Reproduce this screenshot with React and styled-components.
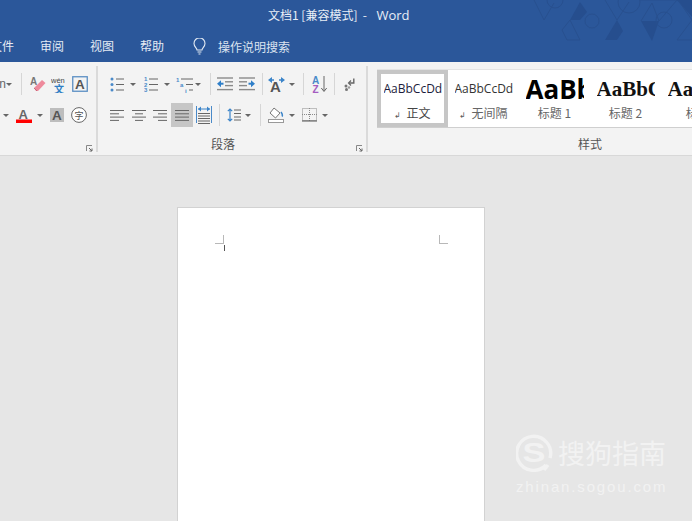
import React from 'react';
import styled, { createGlobalStyle } from 'styled-components';

const GlobalStyle = createGlobalStyle`
  html, body {
    margin: 0;
    padding: 0;
    background: #e6e6e6;
  }
  body {
    font-family: "Noto Sans CJK SC", "Liberation Sans", sans-serif;
  }
`;

const Window = styled.div`
  position: relative;
  width: 692px;
  height: 521px;
  overflow: hidden;
  display: flex;
  flex-direction: column;
`;

const TitleBar = styled.header`
  position: relative;
  height: 62px;
  flex: none;
  background: #2b579a;
  color: #fff;
  overflow: hidden;
`;

const TitleText = styled.div`
  height: 30px;
  padding-left: 268px;
  font-size: 12px;
  line-height: 29px;
  white-space: pre;
  color: #e8eef6;
`;

const TitleApp = styled.span`
  font-family: "Open Sans", sans-serif;
  font-size: 13px;
  margin-left: 4px;
`;

const Tabs = styled.nav`
  display: flex;
  align-items: center;
  height: 32px;
  margin-left: -10px;
  gap: 26px;
`;

const Tab = styled.span`
  font-size: 12px;
  line-height: 32px;
  color: #e4ebf4;
`;

const TellMe = styled.span`
  display: flex;
  align-items: center;
  gap: 12px;
  margin-left: 3px;
  font-size: 12px;
  color: #dbe4f0;
`;

const Pattern = styled.svg`
  position: absolute;
  top: 0;
  right: 0;
`;

const Ribbon = styled.section`
  display: grid;
  grid-template-columns: 98px 270px 444px;
  height: 93px;
  flex: none;
  background: #f3f3f3;
  border-bottom: 1px solid #d8d8d8;
  overflow: hidden;
`;

const Group = styled.div`
  position: relative;
  display: flex;
  flex-direction: column;
  margin: 4px 0 3px;
  height: 86px;
  box-sizing: border-box;
  padding-top: ${(p) => (p.$last ? 3 : 6)}px;
  border-right: ${(p) => (p.$last ? 'none' : '2px solid #dadada')};
`;

const Rows = styled.div`
  display: flex;
  flex-direction: column;
  gap: 7px;
`;

const Row = styled.div`
  display: flex;
  align-items: center;
  height: 24px;
`;

const Tool = styled.span`
  display: flex;
  align-items: center;
  justify-content: center;
  flex: none;
  width: ${(p) => p.$w}px;
  height: ${(p) => p.$h || 24}px;
  margin-left: ${(p) => p.$ml || 0}px;
  background: ${(p) => (p.$active ? '#c6c6c6' : 'transparent')};
`;

const ClippedFont = styled.span`
  flex: none;
  width: 6px;
  overflow: hidden;
  direction: rtl;
  font-family: "Liberation Sans", sans-serif;
  font-size: 12px;
  color: #666;
`;

const Sep = styled.span`
  flex: none;
  width: 1px;
  height: 22px;
  margin-left: ${(p) => p.$ml || 0}px;
  background: #d6d6d6;
`;

const Caret = styled.span`
  flex: none;
  width: 0;
  height: 0;
  margin-left: ${(p) => p.$ml || 0}px;
  border-left: 3px solid transparent;
  border-right: 3px solid transparent;
  border-top: 3px solid #666;
`;

const GroupLabel = styled.div`
  position: absolute;
  left: 0;
  right: 0;
  bottom: 0;
  padding-right: ${(p) => p.$inset || 0}px;
  text-align: center;
  font-size: 12px;
  line-height: 16px;
  color: #555;
`;

const Launcher = styled.svg`
  position: absolute;
  right: 3px;
  bottom: 0;
`;

const Gallery = styled.div`
  display: flex;
  height: 59px;
  margin-left: 9px;
  background: #fff;
  border-top: 1px solid #e4e4e4;
  border-bottom: 1px solid #cfcfcf;
  box-sizing: border-box;
`;

const StyleCard = styled.div`
  flex: none;
  display: flex;
  flex-direction: column;
  align-items: center;
  box-sizing: border-box;
  width: 71px;
  height: 57px;
  overflow: hidden;
  border: 4px solid ${(p) => (p.$selected ? '#c6c6c6' : 'transparent')};
`;

const Sample = styled.div`
  width: 58px;
  height: 30px;
  flex: none;
  overflow: hidden;
  white-space: nowrap;
  color: ${(p) => p.$color || '#222'};
  font-family: ${(p) => (p.$serif ? '"Liberation Serif", serif' : '"Open Sans", sans-serif')};
  font-weight: ${(p) => (p.$bold ? 700 : 400)};
  font-size: ${(p) => p.$size}px;
  line-height: 30px;
`;

const StyleName = styled.div`
  font-size: 12px;
  line-height: 16px;
  margin: 1px 0 0 ${(p) => p.$nudge || 0}px;
  color: ${(p) => (p.$selected ? '#444' : '#666')};
  white-space: nowrap;
`;

const ParaGlyph = styled.span`
  font-size: 8px;
  margin-right: 5px;
  color: #555;
`;

const Canvas = styled.main`
  flex: 1;
  padding: 51px 0 0 177px;
  background: #e6e6e6;
`;

const Page = styled.div`
  position: relative;
  width: 306px;
  height: 400px;
  background: #fff;
  border: 1px solid #d2d2d2;
`;

const CropMark = styled.span`
  position: absolute;
  top: 27px;
  left: ${(p) => p.$left}px;
  width: 8px;
  height: 8px;
  border-bottom: 1px solid #b8b8b8;
  ${(p) => (p.$right ? 'border-left: 1px solid #b8b8b8;' : 'border-right: 1px solid #b8b8b8;')}
`;

const Cursor = styled.span`
  position: absolute;
  top: 37px;
  left: 46px;
  width: 1px;
  height: 6px;
  background: #555;
`;

const Watermark = styled.div`
  position: absolute;
  left: 516px;
  top: 434px;
  color: #f2f2f2;
`;

const MarkTop = styled.div`
  display: flex;
  align-items: center;
  gap: 5px;
`;

const MarkName = styled.span`
  font-size: 27px;
  line-height: 38px;
  white-space: nowrap;
`;

const MarkUrl = styled.div`
  margin-top: 7px;
  font-family: "Liberation Sans", sans-serif;
  font-size: 15px;
  line-height: 16px;
  letter-spacing: 1.85px;
  white-space: nowrap;
`;

const Glyph = styled.text`
  font-family: "Liberation Sans", sans-serif;
`;

const gray = '#666';
const blue = '#4a8ac9';

const Lines = ({ w = 14, rows, stroke = gray }) => (
  <svg width={w} height="13" viewBox={`0 0 ${w} 13`}>
    {rows.map(([x1, x2], i) => (
      <line key={i} x1={x1} x2={x2} y1={1.5 + i * 3.3} y2={1.5 + i * 3.3} stroke={stroke} strokeWidth="1" />
    ))}
  </svg>
);

const Bullets = () => (
  <svg width="14" height="15" viewBox="0 0 14 15">
    {[2, 7.5, 13].map((y) => (
      <g key={y}>
        <circle cx="2" cy={y} r="1.5" fill={blue} />
        <line x1="6" x2="14" y1={y} y2={y} stroke={gray} />
      </g>
    ))}
  </svg>
);

const Numbers = () => (
  <svg width="14" height="17" viewBox="0 0 14 17">
    {[3, 8.5, 14].map((y, i) => (
      <g key={y}>
        <Glyph x="0" y={y + 2} fontSize="6" fontWeight="700" fill={blue}>{i + 1}</Glyph>
        <line x1="5" x2="14" y1={y} y2={y} stroke={gray} />
      </g>
    ))}
  </svg>
);

const Multilevel = () => (
  <svg width="18" height="17" viewBox="0 0 18 17">
    <Glyph x="0" y="6" fontSize="6" fontWeight="700" fill={blue}>1</Glyph>
    <line x1="5" x2="17" y1="3" y2="3" stroke={gray} />
    <Glyph x="4" y="11" fontSize="6" fontWeight="700" fill={blue}>a</Glyph>
    <line x1="10" x2="17" y1="8.5" y2="8.5" stroke={gray} />
    <Glyph x="9" y="16.5" fontSize="6" fontWeight="700" fill={blue}>i</Glyph>
    <line x1="13" x2="17" y1="14" y2="14" stroke={gray} />
  </svg>
);

const Indent = ({ flip }) => (
  <svg width="16" height="14" viewBox="0 0 16 14">
    <g transform={flip ? 'translate(16 0) scale(-1 1)' : undefined}>
      <line x1="0" x2="16" y1="1" y2="1" stroke="#8a8a8a" strokeWidth="1.4" />
      <line x1="8" x2="16" y1="4.8" y2="4.8" stroke="#8a8a8a" strokeWidth="1.4" />
      <line x1="8" x2="16" y1="8.6" y2="8.6" stroke="#8a8a8a" strokeWidth="1.4" />
      <line x1="0" x2="16" y1="12.6" y2="12.6" stroke="#8a8a8a" strokeWidth="1.4" />
      <path d="M6.5 6.7H2" stroke="#2f7fc9" strokeWidth="2" />
      <path d="M4 3.2L0 6.7l4 3.5z" fill="#2f7fc9" />
    </g>
  </svg>
);

const TextDirection = () => (
  <svg width="17" height="15" viewBox="0 0 17 15">
    <Glyph x="2" y="14.5" fontSize="15" fontWeight="700" fill="#555">A</Glyph>
    <path d="M0 3l4-3v6zM17 3l-4-3v6z" fill="#3b84c9" />
    <path d="M3 3h3M11 3h3" stroke="#3b84c9" strokeWidth="1.6" />
  </svg>
);

const Sort = () => (
  <svg width="15" height="18" viewBox="0 0 15 18">
    <Glyph x="0" y="8.5" fontSize="10" fontWeight="700" fill="#4a8ac9">A</Glyph>
    <Glyph x="0.5" y="17.5" fontSize="10" fontWeight="700" fill="#a45cc0">Z</Glyph>
    <path d="M12 1v15M9.3 13l2.7 3.5 2.7-3.5" stroke={gray} fill="none" />
  </svg>
);

const ParaMark = () => (
  <svg width="11" height="13" viewBox="0 0 11 13">
    <path d="M9.8 0.5v4.5H5" stroke="#666" strokeWidth="1.4" fill="none" />
    <path d="M7 2.5L4.5 5l2.5 2.5" stroke="#666" strokeWidth="1.2" fill="none" />
    <circle cx="2" cy="8" r="1.5" fill="#777" />
    <circle cx="2.5" cy="11.5" r="1.5" fill="#777" />
    <circle cx="5" cy="9.5" r="1.2" fill="#999" />
  </svg>
);

const Eraser = () => (
  <svg width="16" height="16" viewBox="0 0 16 16">
    <Glyph x="0" y="9" fontSize="10" fontWeight="700" fill="#777">A</Glyph>
    <path d="M4 12l8-8 3.5 3-7.5 8H6z" fill="#ee8a9c" />
    <path d="M4 12l3 3" stroke="#c86a7c" fill="none" />
  </svg>
);

const Phonetic = () => (
  <svg width="16" height="17" viewBox="0 0 16 17">
    <text x="0" y="7" fontSize="7.5" fill="#444" fontFamily="Liberation Sans, sans-serif">wén</text>
    <text x="3" y="16.5" fontSize="10" fill="#2f7fc4" fontFamily="Noto Sans CJK SC, sans-serif" fontWeight="700">文</text>
  </svg>
);

const BoxedA = () => (
  <svg width="16" height="16" viewBox="0 0 16 16">
    <rect x=".75" y=".75" width="14.5" height="14.5" fill="none" stroke="#5b8fc4" strokeWidth="1.3" />
    <Glyph x="3" y="13" fontSize="13.5" fontWeight="700" fill="#555">A</Glyph>
  </svg>
);

const FontColor = () => (
  <svg width="16" height="16" viewBox="0 0 16 16">
    <Glyph x="2.5" y="11.5" fontSize="13" fontWeight="700" fill="#666">A</Glyph>
    <rect x="0" y="12.5" width="16" height="3.5" fill="#f00" />
  </svg>
);

const ShadedA = () => (
  <svg width="14" height="14" viewBox="0 0 14 14">
    <rect width="14" height="14" fill="#bdbdbd" />
    <Glyph x="2" y="12" fontSize="13.5" fontWeight="700" fill="#555">A</Glyph>
  </svg>
);

const CircledChar = () => (
  <svg width="16" height="16" viewBox="0 0 16 16">
    <circle cx="8" cy="8" r="7.4" fill="#fff" stroke="#666" />
    <text x="3.5" y="12" fontSize="9" fill="#555" fontFamily="Noto Sans CJK SC, sans-serif">字</text>
  </svg>
);

const Distribute = () => (
  <svg width="16" height="18" viewBox="0 0 16 18">
    <path d="M.5 0v17M15.5 0v17" stroke={blue} />
    <path d="M2 3h12" stroke="#3b84c9" />
    <path d="M5 .5L2 3l3 2.5zM11 .5L14 3l-3 2.5z" fill="#3b84c9" />
    {[7.5, 10, 12.5, 15, 17.5].map((y) => (
      <line key={y} x1="2" x2="14" y1={y} y2={y} stroke={gray} />
    ))}
  </svg>
);

const LineSpacing = () => (
  <svg width="14" height="16" viewBox="0 0 14 16">
    <path d="M3 2v12M.8 4.2L3 2l2.2 2.2M.8 11.8L3 14l2.2-2.2" stroke="#3b84c9" strokeWidth="1.2" fill="none" />
    {[3, 6.5, 10, 13].map((y) => (
      <line key={y} x1="7" x2="14" y1={y} y2={y} stroke={gray} />
    ))}
  </svg>
);

const Shading = () => (
  <svg width="16" height="16" viewBox="0 0 16 16">
    <path d="M6 1l6 5-4.5 5L2 6z" fill="#fff" stroke="#777" />
    <path d="M13 5c1.5 2 2 3 1 4.5" stroke="#3b84c9" strokeWidth="1.5" fill="none" />
    <rect x=".5" y="12.5" width="15" height="3" fill="#fff" stroke="#999" />
  </svg>
);

const Borders = () => (
  <svg width="15" height="14" viewBox="0 0 15 14">
    <rect x=".5" y=".5" width="14" height="12" fill="none" stroke="#888" strokeDasharray="1 1" />
    <path d="M7.5 0v13M0 6.5h15" stroke="#888" strokeDasharray="1 1" />
    <line x1="0" x2="15" y1="13" y2="13" stroke="#555" />
  </svg>
);

const Corner = () => (
  <Launcher width="7" height="7" viewBox="0 0 7 7">
    <path d="M.5 6V.5H6" fill="none" stroke="#888" />
    <path d="M3 3l3 3M6 3.5V6H3.5" fill="none" stroke="#666" />
  </Launcher>
);

const Bulb = () => (
  <svg width="13" height="17" viewBox="0 0 13 17">
    <path d="M4 12c0-2-3-3.2-3-6.6A5.5 5.5 0 0 1 12 5.4c0 3.4-3 4.6-3 6.6z" fill="none" stroke="#e4ebf4" strokeWidth="1.1" />
    <path d="M4.5 14h4M5.5 16h2" stroke="#e4ebf4" strokeWidth="1.1" />
  </svg>
);

const SogouMark = () => (
  <svg width="37" height="38" viewBox="0 0 37 38">
    <path d="M30 31A17 17 0 1 1 34 24" fill="none" stroke="#f2f2f2" strokeWidth="3.4" />
    <path d="M28 36l4-5" stroke="#f2f2f2" strokeWidth="3.4" />
    <text x="6.5" y="27.5" fontSize="28" fontWeight="700" fill="#f2f2f2" fontFamily="Liberation Sans, sans-serif" textLength="23" lengthAdjust="spacingAndGlyphs">S</text>
  </svg>
);

const HexPattern = () => (
  <Pattern width="170" height="50" viewBox="0 0 170 50">
    <g fill="#264e8e">
      <path d="M48 20L58 2l7 10-7 8z" />
      <path d="M83 40l12-20 6 11-6 9z" />
      <path d="M119 21h18l-7 20z" />
      <path d="M155 0h15v17z" />
    </g>
    <g fill="none" stroke="#28508f" strokeWidth="1">
      <circle cx="33" cy="0" r="8" />
      <circle cx="70" cy="21" r="7" />
      <circle cx="107" cy="2" r="11" />
      <circle cx="142" cy="20" r="8" />
      <path d="M12 0l10 20 10-17" />
      <path d="M40 30l8-10 10 20H45z" />
      <path d="M83 0l12 20 12-18" />
      <path d="M118 0h38l14 20-15 20h15M119 21L130 3M137 21l-7-18M155 0l-18 21" />
    </g>
  </Pattern>
);

const styleCards = [
  { name: '正文', mark: true, selected: true, size: 12, color: '#1c1c3c' },
  { name: '无间隔', mark: true, size: 12, color: '#333' },
  { name: '标题 1', size: 26, bold: true, color: '#000' },
  { name: '标题 2', size: 21, bold: true, serif: true, color: '#111' },
  { name: '标题 3', size: 21, bold: true, serif: true, color: '#111', nudge: 12 },
];

export default function App() {
  return (
    <>
      <GlobalStyle />
      <Window>
        <TitleBar>
          <HexPattern />
          <TitleText>文档1 [兼容模式]  -  <TitleApp>Word</TitleApp></TitleText>
          <Tabs>
            <Tab>文件</Tab>
            <Tab>审阅</Tab>
            <Tab>视图</Tab>
            <Tab>帮助</Tab>
            <TellMe>
              <Bulb />
              操作说明搜索
            </TellMe>
          </Tabs>
        </TitleBar>

        <Ribbon>
          <Group>
            <Rows>
              <Row>
                <ClippedFont>n</ClippedFont>
                <Caret />
                <Sep $ml={9} />
                <Tool $w={16} $ml={8}><Eraser /></Tool>
                <Tool $w={16} $ml={5}><Phonetic /></Tool>
                <Tool $w={16} $ml={5}><BoxedA /></Tool>
              </Row>
              <Row>
                <Caret $ml={3} />
                <Tool $w={16} $ml={7}><FontColor /></Tool>
                <Caret $ml={5} />
                <Tool $w={14} $ml={7}><ShadedA /></Tool>
                <Tool $w={16} $ml={7}><CircledChar /></Tool>
              </Row>
            </Rows>
            <Corner />
          </Group>

          <Group>
            <Rows>
              <Row>
                <Tool $w={14} $ml={12}><Bullets /></Tool>
                <Caret $ml={6} />
                <Tool $w={14} $ml={8}><Numbers /></Tool>
                <Caret $ml={6} />
                <Tool $w={18} $ml={6}><Multilevel /></Tool>
                <Caret $ml={1} />
                <Sep $ml={9} />
                <Tool $w={16} $ml={6}><Indent /></Tool>
                <Tool $w={16} $ml={6}><Indent flip /></Tool>
                <Sep $ml={7} />
                <Tool $w={17} $ml={5}><TextDirection /></Tool>
                <Caret $ml={4} />
                <Sep $ml={8} />
                <Tool $w={15} $ml={8}><Sort /></Tool>
                <Sep $ml={7} />
                <Tool $w={11} $ml={9}><ParaMark /></Tool>
              </Row>
              <Row>
                <Tool $w={14} $ml={12}><Lines rows={[[0, 14], [0, 9], [0, 14], [0, 9]]} /></Tool>
                <Tool $w={14} $ml={8}><Lines rows={[[0, 14], [3, 11], [0, 14], [3, 11]]} /></Tool>
                <Tool $w={14} $ml={7}><Lines rows={[[0, 14], [5, 14], [0, 14], [5, 14]]} /></Tool>
                <Tool $w={22} $ml={4} $active><Lines rows={[[0, 14], [0, 14], [0, 14], [0, 14]]} /></Tool>
                <Tool $w={16} $ml={3}><Distribute /></Tool>
                <Sep $ml={7} />
                <Tool $w={14} $ml={7}><LineSpacing /></Tool>
                <Caret $ml={4} />
                <Sep $ml={9} />
                <Tool $w={16} $ml={7}><Shading /></Tool>
                <Caret $ml={5} />
                <Tool $w={15} $ml={7}><Borders /></Tool>
                <Caret $ml={5} />
              </Row>
            </Rows>
            <GroupLabel $inset={18}>段落</GroupLabel>
            <Corner />
          </Group>

          <Group $last>
            <Gallery>
              {styleCards.map((card) => (
                <StyleCard key={card.name} $selected={card.selected}>
                  <Sample $size={card.size} $bold={card.bold} $serif={card.serif} $color={card.color}>AaBbCcDd</Sample>
                  <StyleName $selected={card.selected} $nudge={card.nudge}>
                    {card.mark && <ParaGlyph>↲</ParaGlyph>}
                    {card.name}
                  </StyleName>
                </StyleCard>
              ))}
            </Gallery>
            <GroupLabel>样式</GroupLabel>
          </Group>
        </Ribbon>

        <Canvas>
          <Page>
            <CropMark $left={37} />
            <Cursor />
            <CropMark $left={261} $right />
          </Page>
        </Canvas>

        <Watermark>
          <MarkTop>
            <SogouMark />
            <MarkName>搜狗指南</MarkName>
          </MarkTop>
          <MarkUrl>zhinan.sogou.com</MarkUrl>
        </Watermark>
      </Window>
    </>
  );
}
